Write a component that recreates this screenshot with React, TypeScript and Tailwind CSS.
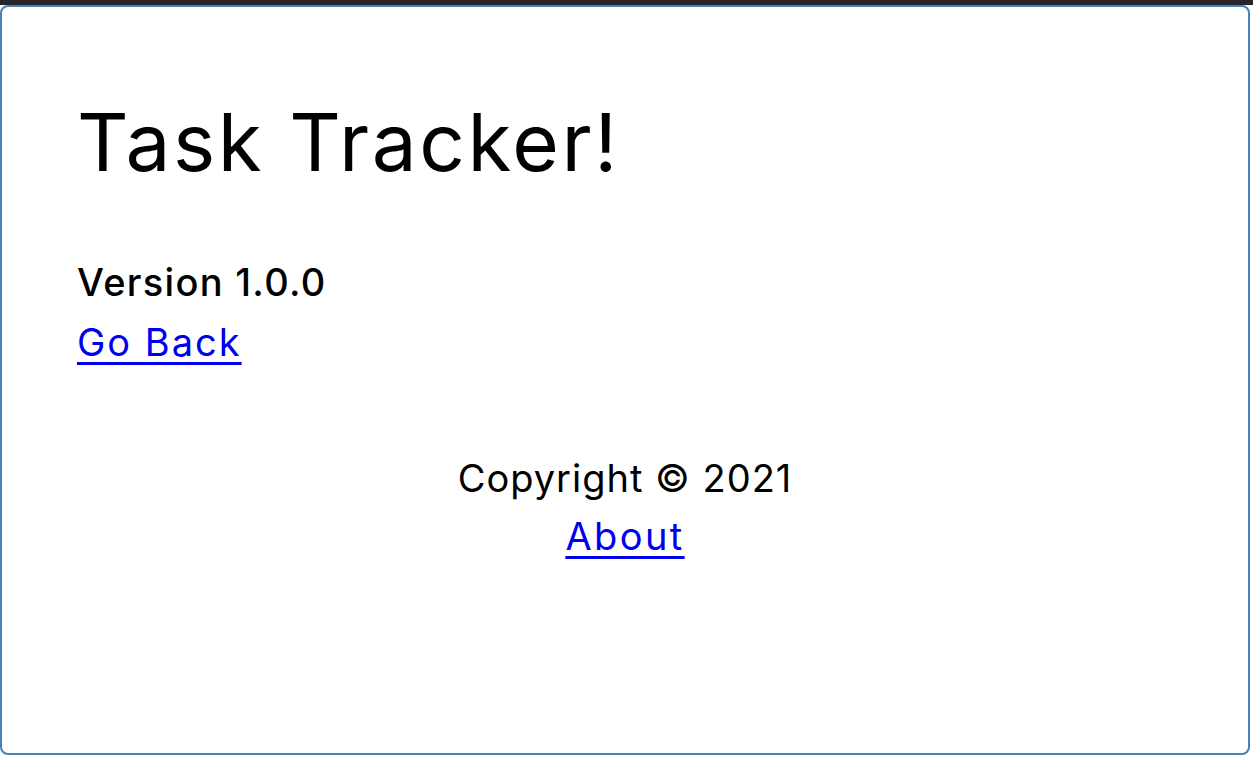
export default function App() {
  return (
    <div className="min-h-screen bg-white font-['Inter','Liberation_Sans',sans-serif] text-black">
      {/* top window strip */}
      <div className="h-[5px] bg-[#25252b]"></div>

      <div className="w-[1250px] h-[750px] border-2 border-[#4682b4] rounded-[8px] pt-[87px] px-[75px]">
        <header>
          <h1 className="text-[80px] leading-[96px] font-normal tracking-[2.6px]">Task Tracker!</h1>
        </header>

        <div className="mt-[62px]">
          <h4 className="text-[38px] leading-[60px] font-medium tracking-[1.3px]">Version 1.0.0</h4>
          <a href="#" className="block w-fit text-[38px] leading-[60px] tracking-[2px] text-[#0000ee] underline underline-offset-[6px]">
            Go Back
          </a>
        </div>

        <footer className="mt-[77px] text-center">
          <p className="text-[38px] leading-[58px] tracking-[1px]">Copyright &copy; 2021</p>
          <a href="#" className="text-[38px] leading-[58px] tracking-[2.4px] text-[#0000ee] underline underline-offset-[6px]">
            About
          </a>
        </footer>
      </div>
    </div>
  );
}
